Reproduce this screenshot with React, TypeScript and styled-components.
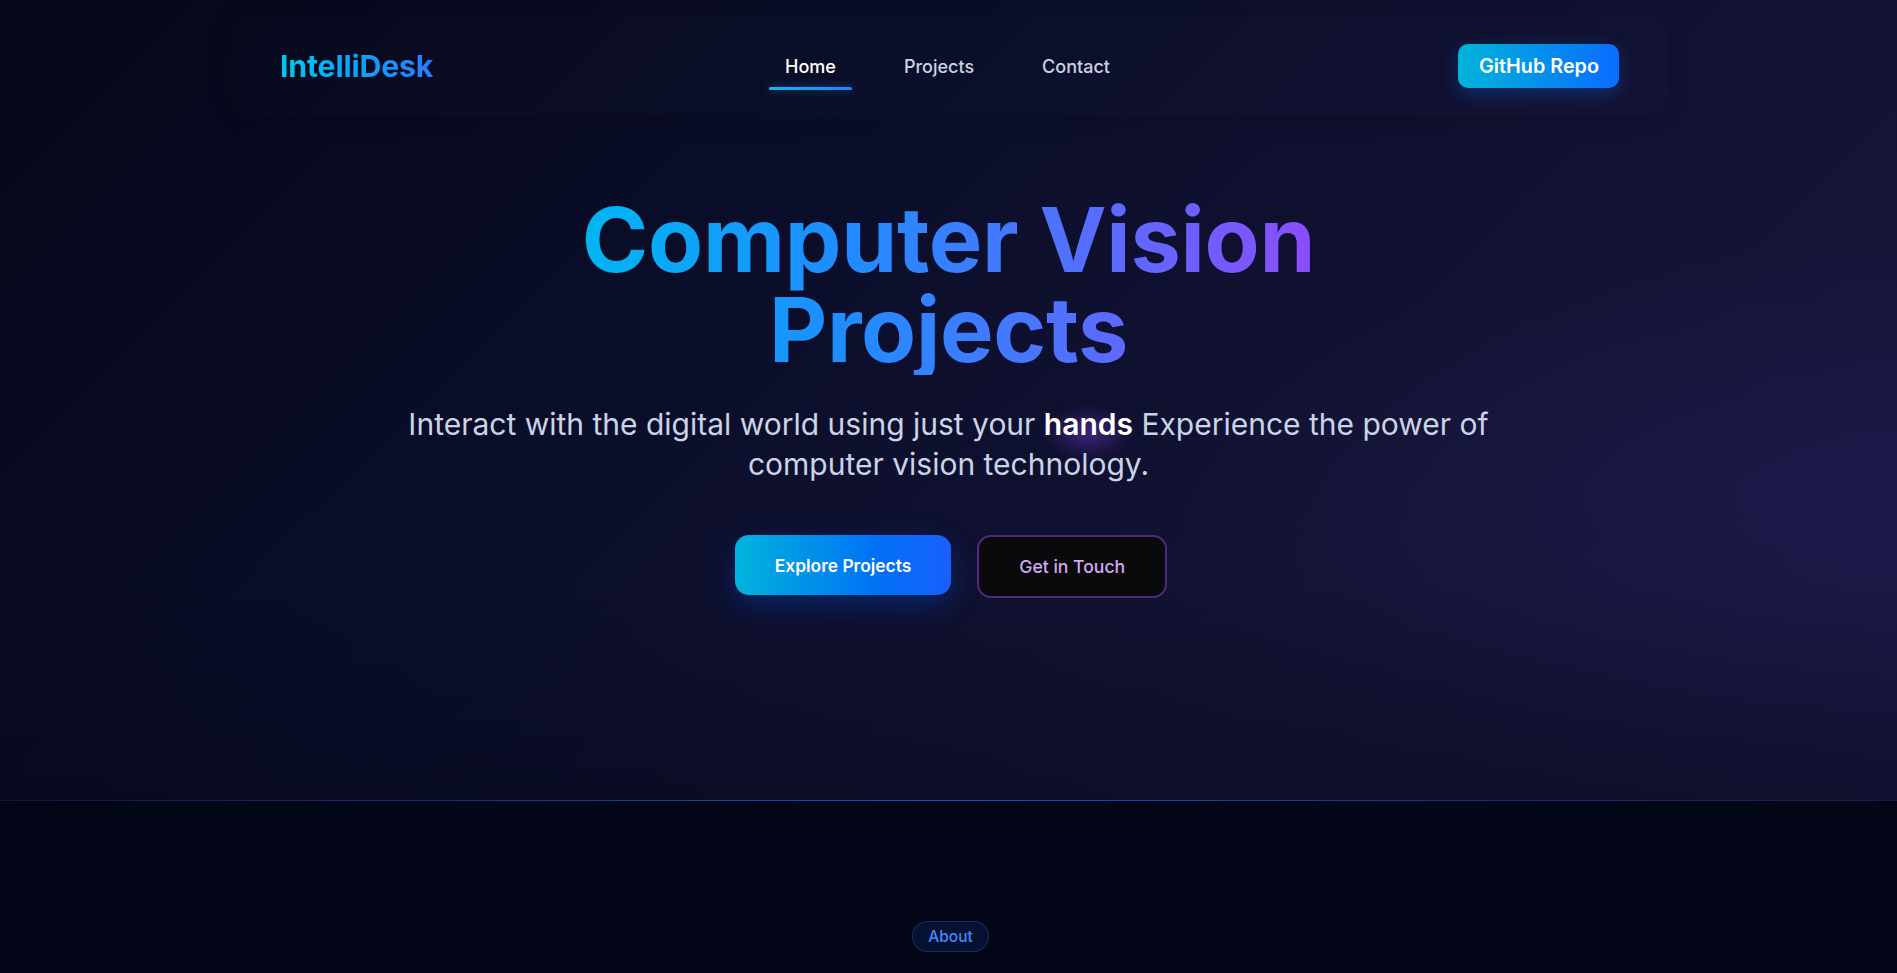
import React from "react";
import styled, { createGlobalStyle } from "styled-components";

const GlobalStyle = createGlobalStyle`
  * { box-sizing: border-box; }
  html, body { margin: 0; padding: 0; }
  body {
    background: #030617;
    font-family: Inter, "Noto Sans", "Liberation Sans", sans-serif;
    color: #e2e8f0;
    overflow-x: hidden;
  }
`;

const Page = styled.div`
  min-height: 100vh;
  background: #030617;
`;

const Hero = styled.section`
  position: relative;
  height: 801px;
  padding-top: 16px;
  background:
    radial-gradient(ellipse 55% 45% at 100% 62%, rgba(40, 32, 100, 0.4), transparent 70%),
    linear-gradient(180deg, rgba(3, 6, 23, 0) 72%, rgba(3, 6, 23, 0.4) 100%),
    linear-gradient(135deg, #050818 0%, #0b0e2b 40%, #131334 70%, #191740 100%);
  &::after {
    content: "";
    position: absolute;
    left: 0;
    right: 0;
    bottom: 0;
    height: 1px;
    background: linear-gradient(90deg, rgba(37, 99, 235, 0.15), rgba(37, 99, 235, 0.75) 50%, rgba(37, 99, 235, 0.15));
  }
`;

const NavBar = styled.nav`
  width: 1437px;
  height: 99px;
  margin: 0 auto;
  padding: 0 48px 0 50px;
  display: grid;
  grid-template-columns: 1fr auto 1fr;
  align-items: center;
  border-radius: 18px;
  background: rgba(255, 255, 255, 0.008);
  box-shadow: 0 4px 24px rgba(0, 0, 0, 0.12);
`;

const Logo = styled.a`
  justify-self: start;
  font-size: 30.3px;
  font-weight: 700;
  letter-spacing: -0.2px;
  background: linear-gradient(90deg, #00c8f2 0%, #0aa6f5 45%, #2b7bff 100%);
  -webkit-background-clip: text;
  background-clip: text;
  color: transparent;
  text-decoration: none;
`;

const NavLinks = styled.div`
  display: flex;
  align-items: center;
  gap: 36px;
  padding-top: 4px;
  margin-right: 4px;
`;

const NavLink = styled.a<{ $active?: boolean }>`
  position: relative;
  padding: 10px 16px 12px;
  font-size: 18px;
  font-weight: 500;
  color: ${(p) => (p.$active ? "#ffffff" : "#cdd3e0")};
  text-decoration: none;
  &::after {
    content: "";
    position: absolute;
    left: 0;
    right: 0;
    bottom: -1px;
    height: 3px;
    border-radius: 2px;
    background: linear-gradient(90deg, #00c2f5, #2b7bff);
    box-shadow: 0 0 8px rgba(0, 170, 255, 0.45);
    display: ${(p) => (p.$active ? "block" : "none")};
  }
`;

const RepoButton = styled.a`
  justify-self: end;
  height: 44px;
  padding: 0 20px 0 21px;
  display: inline-flex;
  align-items: center;
  border-radius: 10px;
  font-size: 19.8px;
  font-weight: 600;
  color: #ffffff;
  text-decoration: none;
  background: linear-gradient(90deg, #00b4d8 0%, #0a6cff 100%);
  box-shadow: 0 6px 18px rgba(0, 110, 255, 0.3);
`;

const HeroContent = styled.div`
  display: flex;
  flex-direction: column;
  align-items: center;
  text-align: center;
  margin-top: 80px;
`;

const Title = styled.h1`
  margin: 0;
  width: fit-content;
  font-size: 90px;
  line-height: 1;
  font-weight: 700;
  letter-spacing: -0.3px;
  background: linear-gradient(90deg, #00b6f2 0%, #1f8dff 35%, #4f72ff 65%, #8a4dff 100%);
  -webkit-background-clip: text;
  background-clip: text;
  color: transparent;
`;

const Subtitle = styled.p`
  margin: 30px 0 0;
  max-width: 1120px;
  font-size: 30px;
  line-height: 1.32;
  font-weight: 400;
  color: #cbd4e6;
`;

const Hands = styled.strong`
  position: relative;
  z-index: 0;
  font-weight: 600;
  color: #ffffff;
  &::after {
    content: "";
    position: absolute;
    z-index: -1;
    left: 50%;
    top: 75%;
    width: 90px;
    height: 50px;
    transform: translate(-50%, -50%);
    background: radial-gradient(ellipse at center, rgba(120, 60, 220, 0.5) 0%, rgba(120, 60, 220, 0) 70%);
    filter: blur(6px);
  }
`;

const Actions = styled.div`
  display: flex;
  align-items: flex-start;
  gap: 26px;
  margin-top: 51px;
  padding-left: 5px;
`;

const PrimaryButton = styled.a`
  height: 60px;
  padding: 0 40px;
  display: inline-flex;
  align-items: center;
  border-radius: 14px;
  font-size: 17.4px;
  font-weight: 600;
  color: #ffffff;
  text-decoration: none;
  background: linear-gradient(90deg, #00b4dc 0%, #0072f5 65%, #1a5fff 100%);
  box-shadow: 0 10px 28px rgba(0, 90, 255, 0.28);
`;

const GhostButton = styled.a`
  height: 63px;
  padding: 0 40px;
  display: inline-flex;
  align-items: center;
  justify-content: center;
  border-radius: 14px;
  border: 2px solid #4e2a7e;
  font-size: 17.6px;
  font-weight: 500;
  color: #d2aaf6;
  text-decoration: none;
  background: #0a0a0c;
`;

const About = styled.section`
  display: flex;
  flex-direction: column;
  align-items: center;
  padding-top: 120px;
  padding-left: 4px;
`;

const Pill = styled.span`
  padding: 4px 15px;
  border-radius: 999px;
  border: 1px solid rgba(59, 130, 246, 0.28);
  background: rgba(29, 78, 216, 0.14);
  color: #3f8cff;
  font-size: 15.5px;
  line-height: 21px;
  font-weight: 500;
`;

export default function App() {
  return (
    <Page>
      <GlobalStyle />
      <Hero>
        <NavBar>
          <Logo href="#">IntelliDesk</Logo>
          <NavLinks>
            <NavLink href="#" $active>Home</NavLink>
            <NavLink href="#">Projects</NavLink>
            <NavLink href="#">Contact</NavLink>
          </NavLinks>
          <RepoButton href="#">GitHub Repo</RepoButton>
        </NavBar>
        <HeroContent>
          <Title>
            Computer Vision
            <br />
            Projects
          </Title>
          <Subtitle>
            Interact with the digital world using just your <Hands>hands</Hands> Experience the power of computer
            vision technology.
          </Subtitle>
          <Actions>
            <PrimaryButton href="#">Explore Projects</PrimaryButton>
            <GhostButton href="#">Get in Touch</GhostButton>
          </Actions>
        </HeroContent>
      </Hero>
      <About>
        <Pill>About</Pill>
      </About>
    </Page>
  );
}
